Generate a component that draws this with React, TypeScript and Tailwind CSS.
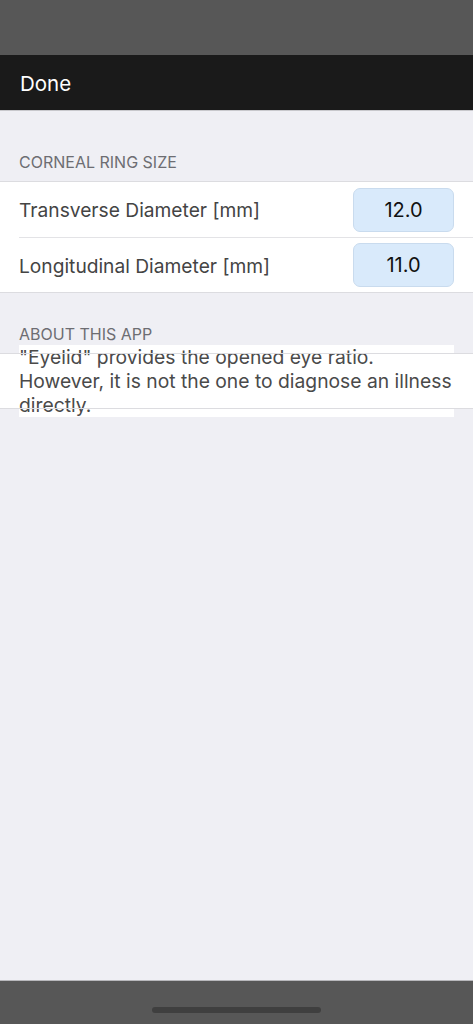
const rows = [
  { label: "Transverse Diameter [mm]", value: "12.0" },
  { label: "Longitudinal Diameter [mm]", value: "11.0" },
]

export default function App() {
  return (
    <div
      className="flex flex-col w-[473px] h-[1024px] bg-[#efeff4] overflow-hidden"
      style={{ fontFamily: "Inter, 'Noto Sans', sans-serif" }}
    >
      {/* status bar */}
      <div className="h-[55px] shrink-0 bg-[#575757]" />

      {/* nav bar */}
      <div className="h-[56px] shrink-0 flex items-center px-5 pt-[3px] bg-[#1a1a1a] border-b border-[#c8c8cc]">
        <span className="text-[20.5px] text-white">Done</span>
      </div>

      <div className="flex-1 flex flex-col">
        {/* corneal ring size */}
        <div className="h-[70px] flex items-end pb-[7px] px-[19px] text-[16px] text-[#6d6d72]">
          CORNEAL RING SIZE
        </div>
        <div className="bg-white border-y border-[#dcdce0]">
          {rows.map((r, i) => (
            <div key={r.label} className="flex items-center h-[55px] pl-[19px]">
              <div
                className={
                  "flex-1 h-full flex items-center pr-[19px] " +
                  (i > 0 ? "border-t border-[#e3e3e6]" : "")
                }
              >
                <span className="flex-1 pt-[2px] text-[19.2px] text-[#444]">{r.label}</span>
                <div className="w-[101px] h-[44px] rounded-[7px] bg-[#d9eafb] border border-[#c9dbee] flex items-center justify-center text-[20px] text-[#111]">
                  {r.value}
                </div>
              </div>
            </div>
          ))}
        </div>

        {/* about */}
        <div className="h-[60px] flex items-end pb-[7px] px-[19px] text-[16px] text-[#6d6d72]">
          ABOUT THIS APP
        </div>
        <div className="relative h-[56px] bg-white">
          <div className="absolute left-[19px] top-[-8px] w-[435px] h-[72px] bg-white text-[19.3px] leading-[24px] text-[#4a4a4a] whitespace-nowrap">
            "Eyelid" provides the opened eye ratio.
            <br />
            However, it is not the one to diagnose an illness
            <br />
            directly.
          </div>
          <div className="absolute left-0 right-0 top-0 h-px bg-[#dcdce0]" />
          <div className="absolute left-0 right-0 bottom-0 h-px bg-[#dcdce0]" />
        </div>
      </div>

      {/* home indicator */}
      <div className="h-[44px] shrink-0 bg-[#575757] border-t border-[#b8b8bc] flex justify-center pt-[26px]">
        <div className="w-[169px] h-[6px] rounded-full bg-[#3f3f3f]" />
      </div>
    </div>
  )
}
